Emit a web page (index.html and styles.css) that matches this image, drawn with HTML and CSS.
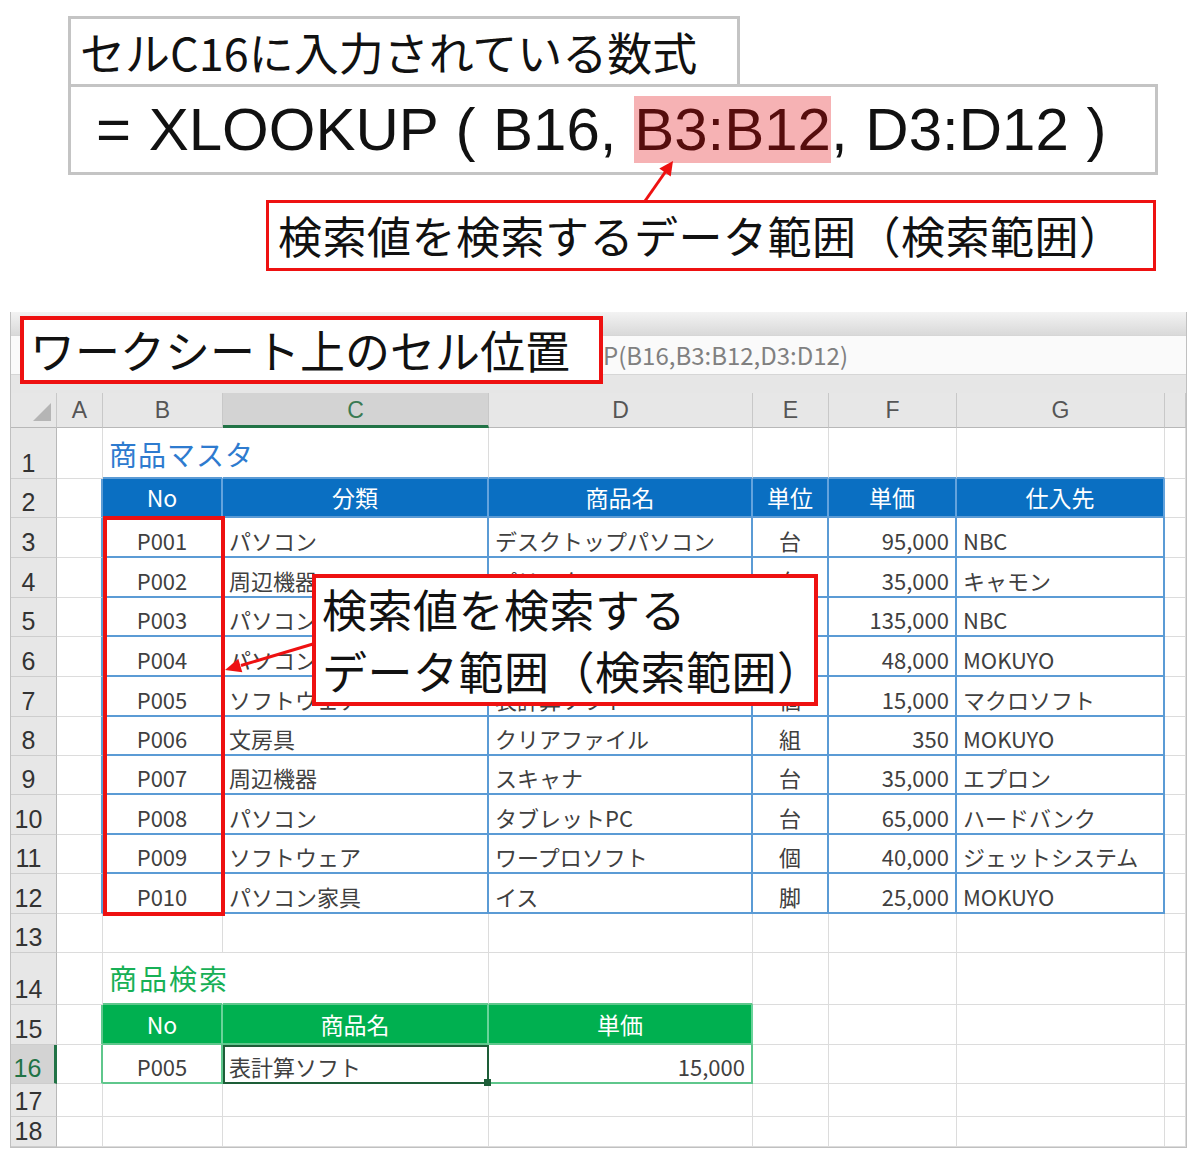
FILE: index.html
```html
<!DOCTYPE html>
<html>

<head>
	<meta charset='utf-8'>
	<title>XLOOKUP 検索範囲</title>
	<link rel="stylesheet" href="styles.css">
</head>

<body>
	<div class="page">
	<div class="note">
		<div class="note-label">セルC16に入力されている数式</div>
		<div class="note-formula">= XLOOKUP ( B16, <span class="hl">B3:B12</span>, D3:D12 )</div>
		<div class="note-callout">検索値を検索するデータ範囲（検索範囲）</div>
	</div>

	<div class="sheet">
		<div class="ribbon"></div>
		<div class="fbar">P(B16,B3:B12,D3:D12)</div>
		<div class="gap"></div>
		<div class="grid">
			<div class="hd corner"></div><div class="hd">A</div><div class="hd">B</div><div class="hd on">C</div><div class="hd">D</div><div class="hd">E</div><div class="hd">F</div><div class="hd">G</div><div class="hd"></div>

			<div class="rh">1</div><div></div><div class="bl-b nob title-blue">商品マスタ</div><div class="bl-b"></div><div class="bl-b"></div><div class="bl-b"></div><div class="bl-b"></div><div class="bl-b"></div><div></div>
			<div class="rh">2</div><div class="bl-r"></div><div class="bh">No</div><div class="bh">分類</div><div class="bh">商品名</div><div class="bh">単位</div><div class="bh">単価</div><div class="bh">仕入先</div><div></div>

			<div class="rh">3</div><div class="bl-r"></div><div class="bd ctr">P001</div><div class="bd">パソコン</div><div class="bd">デスクトップパソコン</div><div class="bd ctr">台</div><div class="bd rt">95,000</div><div class="bd">NBC</div><div></div>
			<div class="rh">4</div><div class="bl-r"></div><div class="bd ctr">P002</div><div class="bd">周辺機器</div><div class="bd">プリンタ</div><div class="bd ctr">台</div><div class="bd rt">35,000</div><div class="bd">キャモン</div><div></div>
			<div class="rh">5</div><div class="bl-r"></div><div class="bd ctr">P003</div><div class="bd">パソコン</div><div class="bd">ノートパソコン</div><div class="bd ctr">台</div><div class="bd rt">135,000</div><div class="bd">NBC</div><div></div>
			<div class="rh">6</div><div class="bl-r"></div><div class="bd ctr">P004</div><div class="bd">パソコン家具</div><div class="bd">パソコンデスク</div><div class="bd ctr">台</div><div class="bd rt">48,000</div><div class="bd">MOKUYO</div><div></div>
			<div class="rh">7</div><div class="bl-r"></div><div class="bd ctr">P005</div><div class="bd">ソフトウェア</div><div class="bd">表計算ソフト</div><div class="bd ctr">個</div><div class="bd rt">15,000</div><div class="bd">マクロソフト</div><div></div>
			<div class="rh">8</div><div class="bl-r"></div><div class="bd ctr">P006</div><div class="bd">文房具</div><div class="bd">クリアファイル</div><div class="bd ctr">組</div><div class="bd rt">350</div><div class="bd">MOKUYO</div><div></div>
			<div class="rh">9</div><div class="bl-r"></div><div class="bd ctr">P007</div><div class="bd">周辺機器</div><div class="bd">スキャナ</div><div class="bd ctr">台</div><div class="bd rt">35,000</div><div class="bd">エプロン</div><div></div>
			<div class="rh">10</div><div class="bl-r"></div><div class="bd ctr">P008</div><div class="bd">パソコン</div><div class="bd">タブレットPC</div><div class="bd ctr">台</div><div class="bd rt">65,000</div><div class="bd">ハードバンク</div><div></div>
			<div class="rh">11</div><div class="bl-r"></div><div class="bd ctr">P009</div><div class="bd">ソフトウェア</div><div class="bd">ワープロソフト</div><div class="bd ctr">個</div><div class="bd rt">40,000</div><div class="bd">ジェットシステム</div><div></div>
			<div class="rh">12</div><div class="bl-r"></div><div class="bd ctr">P010</div><div class="bd">パソコン家具</div><div class="bd">イス</div><div class="bd ctr">脚</div><div class="bd rt">25,000</div><div class="bd">MOKUYO</div><div></div>

			<div class="rh">13</div><div></div><div></div><div></div><div></div><div></div><div></div><div></div><div></div>
			<div class="rh">14</div><div></div><div class="gr-b nob title-green">商品検索</div><div class="gr-b"></div><div class="gr-b"></div><div></div><div></div><div></div><div></div>
			<div class="rh">15</div><div class="gr-r"></div><div class="gh">No</div><div class="gh">商品名</div><div class="gh">単価</div><div></div><div></div><div></div><div></div>
			<div class="rh on">16</div><div class="gr-r"></div><div class="gd ctr">P005</div><div class="gd sel">表計算ソフト</div><div class="gd rt">15,000</div><div></div><div></div><div></div><div></div>
			<div class="rh">17</div><div></div><div></div><div></div><div></div><div></div><div></div><div></div><div></div>
			<div class="rh">18</div><div></div><div></div><div></div><div></div><div></div><div></div><div></div><div></div>
		</div>

		<div class="tag-cellpos">ワークシート上のセル位置</div>
		<div class="range-box"></div>
		<div class="callout">検索値を検索する<br>データ範囲（検索範囲）</div>
	</div>

	<svg class="arrows" width="1200" height="1163" viewBox="0 0 1200 1163">
		<line x1="645" y1="201" x2="666" y2="171" stroke="#ee1111" stroke-width="3"/>
		<polygon points="673,161 670.7,176.5 659.3,168.5" fill="#ee1111"/>
		<line x1="313" y1="644" x2="241" y2="665.5" stroke="#ee1111" stroke-width="3"/>
		<polygon points="225,670 242.3,672.2 238.3,658.8" fill="#ee1111"/>
	</svg>
	</div>
</body>

</html>
```

FILE: styles.css
```css
body {
	margin: 0;
	background: #fff;
	color: #111;
	font-family: "Noto Sans CJK JP", sans-serif;
}
.page {
	position: relative;
	width: 1200px;
	height: 1163px;
	overflow: hidden;
}

/* formula explanation on top */
.note {
	padding: 16px 0 0 68px;
}
.note-label {
	box-sizing: border-box;
	width: 672px;
	height: 68px;
	border: 3px solid #c4c4c4;
	border-bottom: 0;
	padding-left: 9px;
	font-size: 45px;
	line-height: 66px;
	white-space: nowrap;
}
.note-formula {
	box-sizing: border-box;
	width: 1090px;
	height: 91px;
	border: 3px solid #c4c4c4;
	padding-left: 25px;
	font: 60px/85px "Liberation Sans", sans-serif;
	word-spacing: 1px;
	white-space: nowrap;
}
.hl {
	background: #f6b2b4;
	color: #560d0d;
}
.note-callout {
	box-sizing: border-box;
	width: 890px;
	height: 71px;
	margin: 25px 0 0 198px;
	border: 3px solid #ee1111;
	padding-left: 9px;
	font-size: 44px;
	line-height: 64px;
	letter-spacing: 0.5px;
	white-space: nowrap;
}

/* worksheet */
.sheet {
	position: relative;
	box-sizing: border-box;
	width: 1177px;
	margin: 41px 0 0 10px;
	border: 1px solid #c0c0c0;
	border-top: 0;
}
.ribbon {
	height: 23px;
	background: linear-gradient(#f3f3f3, #d9d9d9);
}
.fbar {
	box-sizing: border-box;
	height: 40px;
	background: #fafafa;
	border-top: 1px solid #d6d6d6;
	border-bottom: 1px solid #d6d6d6;
	padding-left: 592px;
	font-size: 24px;
	line-height: 38px;
	color: #808080;
}
.gap {
	height: 18px;
	background: #e6e6e6;
}
.grid {
	display: grid;
	grid-template-columns: 46px 46px 120px 266px 264px 76px 128px 208px 21px;
	grid-template-rows: 35px 51px 39px 40px 40px 39px 40px 40px 39px 39px 40px 39px 40px 39px 52px 40px 39px 33px 30px;
}
.grid > div {
	box-sizing: border-box;
	display: flex;
	align-items: flex-end;
	min-width: 0;
	padding: 0 6px 5px;
	border-right: 1px solid #dcdcdc;
	border-bottom: 1px solid #dcdcdc;
	font-size: 22px;
	line-height: 1;
	color: #404040;
	white-space: nowrap;
}
.grid > .hd {
	align-items: center;
	justify-content: center;
	padding: 0;
	background: #e7e7e7;
	border-right-color: #c8c8c8;
	border-bottom-color: #b8b8b8;
	font: 23px "Liberation Sans", sans-serif;
	color: #555;
}
.grid > .hd.on {
	padding-top: 3px;
	background: #d3d3d3;
	border-bottom: 3px solid #217346;
	color: #3a7a52;
}
.grid > .corner {
	align-items: flex-end;
	justify-content: flex-end;
	padding: 0 5px 6px 0;
}
.corner::after {
	content: '';
	border-left: 18px solid transparent;
	border-bottom: 18px solid #b5b5b5;
}
.grid > .rh {
	justify-content: center;
	padding: 0 10px 0 0;
	background: #e7e7e7;
	border-right-color: #b8b8b8;
	border-bottom-color: #cdcdcd;
	font: 25px "Liberation Sans", sans-serif;
	color: #333;
}
.grid > .rh.on {
	background: #d3d3d3;
	border-right: 3px solid #217346;
	color: #217346;
}
.grid > .ctr { justify-content: center; }
.grid > .rt { justify-content: flex-end; }
.grid > .nob { border-right-color: transparent; }

.grid > .title-blue {
	padding-bottom: 9px;
	font-size: 28px;
	letter-spacing: 1px;
	color: #2e7bcf;
}
.grid > .title-green {
	padding-bottom: 11px;
	font-size: 28px;
	letter-spacing: 2px;
	color: #17b056;
}

/* blue master table */
.grid > .bl-r { border-right: 2px solid #5b9bd5; }
.grid > .bl-b { border-bottom: 2px solid #5b9bd5; }
.grid > .bh {
	align-items: center;
	justify-content: center;
	padding: 0;
	background: #0a6fc2;
	border-right: 2px solid #63a3dd;
	border-bottom: 2px solid #5b9bd5;
	color: #fff;
	font-size: 23px;
}
.grid > .bd {
	border-right: 2px solid #5b9bd5;
	border-bottom: 2px solid #5b9bd5;
}

/* green search table */
.grid > .gr-r { border-right: 2px solid #5fc78c; }
.grid > .gr-b { border-bottom: 2px solid #5fc78c; }
.grid > .gh {
	align-items: center;
	justify-content: center;
	padding: 0;
	background: #00b050;
	border-right: 2px solid #6ad39a;
	border-bottom: 2px solid #5fc78c;
	color: #fff;
	font-size: 23px;
}
.grid > .gd {
	border-right: 2px solid #5fc78c;
	border-bottom: 2px solid #5fc78c;
}
.grid > .sel {
	position: relative;
	outline: 2px solid #1d5e38;
	outline-offset: -2px;
}
.sel::after {
	content: '';
	position: absolute;
	right: -4px;
	bottom: -4px;
	width: 7px;
	height: 7px;
	background: #1d5e38;
}

/* red annotations over the sheet */
.tag-cellpos {
	position: absolute;
	left: 9px;
	top: 4px;
	box-sizing: border-box;
	width: 583px;
	height: 68px;
	border: 4px solid #ee1111;
	background: #fff;
	padding-left: 6px;
	font-size: 45px;
	line-height: 60px;
	color: #111;
	white-space: nowrap;
}
.range-box {
	position: absolute;
	left: 92px;
	top: 204px;
	box-sizing: border-box;
	width: 122px;
	height: 400px;
	border: 4px solid #ee1111;
}
.callout {
	position: absolute;
	left: 301px;
	top: 262px;
	box-sizing: border-box;
	width: 506px;
	height: 132px;
	border: 4px solid #ee1111;
	background: #fff;
	padding: 0 0 0 6px;
	font-size: 45px;
	line-height: 62px;
	letter-spacing: 0.5px;
	color: #111;
	white-space: nowrap;
}
.arrows {
	position: absolute;
	left: 0;
	top: 0;
	pointer-events: none;
}
```
